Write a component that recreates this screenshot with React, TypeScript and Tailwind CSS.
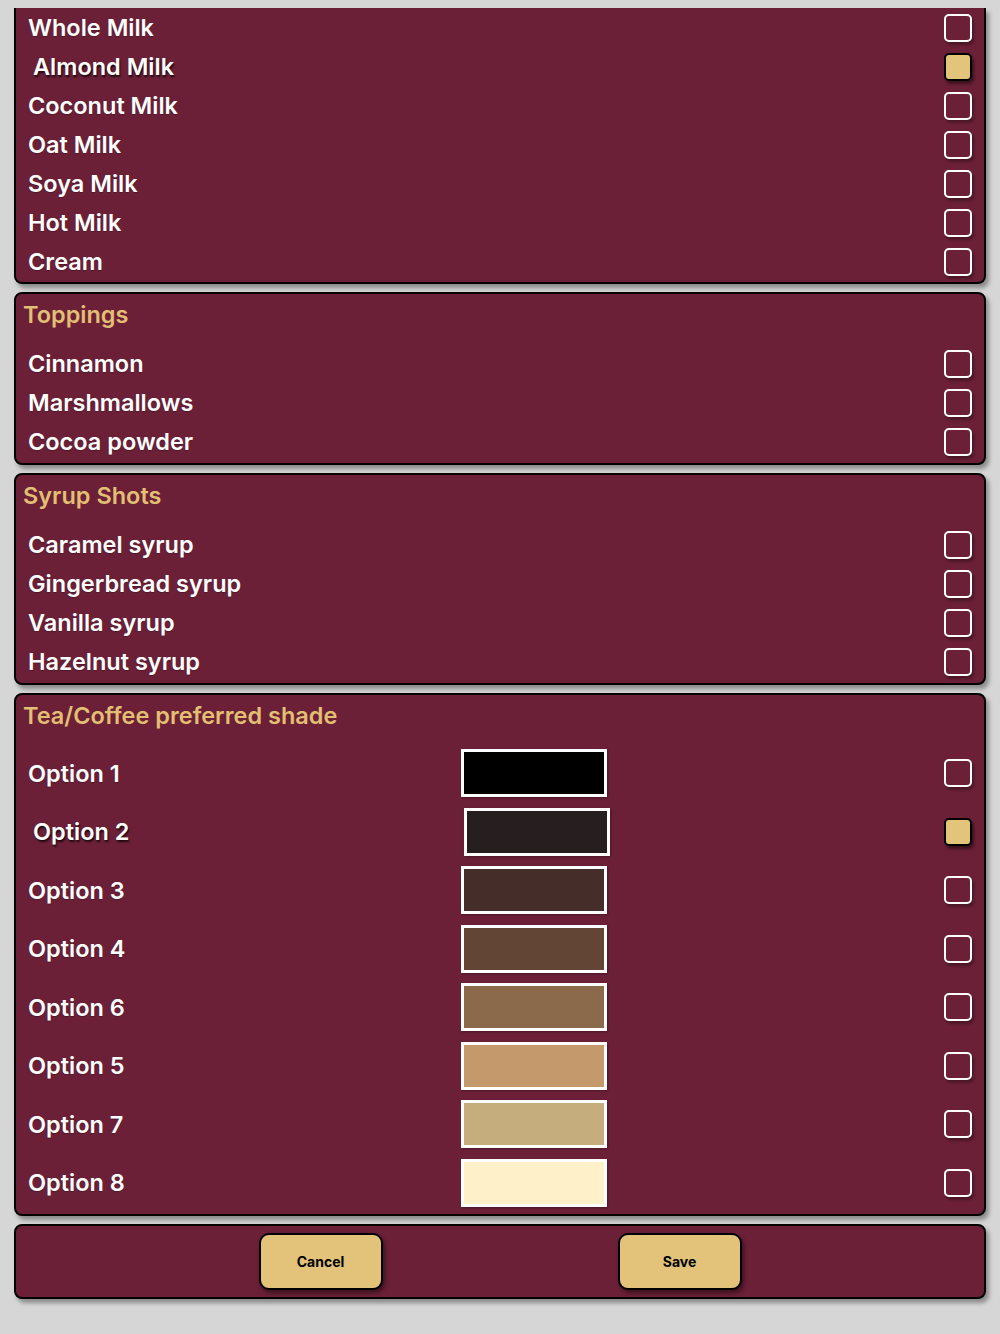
import React from "react";

const font = { fontFamily: "Inter, 'Noto Sans', sans-serif" };

function Check({ checked }: { checked?: boolean }) {
  return checked ? (
    <div className="w-[28px] h-[28px] rounded-[5px] border-2 border-black bg-[#e3c47b] shadow-[2px_3px_3px_rgba(0,0,0,0.45)]" />
  ) : (
    <div className="w-[28px] h-[28px] rounded-[5px] border-2 border-white shadow-[2px_3px_3px_rgba(0,0,0,0.3)]" />
  );
}

function Row({ label, checked }: { label: string; checked?: boolean }) {
  return (
    <div className="h-[39px] flex items-center justify-between pl-[12px] pr-[12px]">
      <span
        className={
          "text-[23.5px] font-semibold text-white " +
          (checked
            ? "translate-x-[5px] [text-shadow:1px_2px_2px_rgba(0,0,0,0.75)]"
            : "[text-shadow:0_1px_1px_rgba(0,0,0,0.25)]")
        }
      >
        {label}
      </span>
      <Check checked={checked} />
    </div>
  );
}

function Header({ title }: { title: string }) {
  return (
    <div className="h-[42px] flex items-center pl-[7px]">
      <span className="text-[23.5px] font-semibold text-[#e2bf73]">{title}</span>
    </div>
  );
}

const panel =
  "mx-[14px] bg-[#6b2038] border-2 border-black rounded-[8px] shadow-[3px_4px_4px_rgba(0,0,0,0.35)]";

const shades = [
  { label: "Option 1", color: "#000000" },
  { label: "Option 2", color: "#261e1f", checked: true },
  { label: "Option 3", color: "#452e29" },
  { label: "Option 4", color: "#634535" },
  { label: "Option 6", color: "#8a6a4b" },
  { label: "Option 5", color: "#c4996b" },
  { label: "Option 7", color: "#c5ad7e" },
  { label: "Option 8", color: "#fef1ca" },
];

export default function App() {
  return (
    <div className="w-[1000px] h-[1334px] bg-[#d6d6d6] overflow-hidden" style={font}>
      <div className="pt-[10px]">
        <div className={panel + " border-t-0 rounded-t-none"}>
          <div className="-mt-[2px] pb-[1px]">
            <Row label="Whole Milk" />
            <Row label="Almond Milk" checked />
            <Row label="Coconut Milk" />
            <Row label="Oat Milk" />
            <Row label="Soya Milk" />
            <Row label="Hot Milk" />
            <Row label="Cream" />
          </div>
        </div>

        <div className={panel + " mt-[8px] pb-[2px]"}>
          <Header title="Toppings" />
          <div className="mt-[8px]">
            <Row label="Cinnamon" />
            <Row label="Marshmallows" />
            <Row label="Cocoa powder" />
          </div>
        </div>

        <div className={panel + " mt-[8px] pb-[2px]"}>
          <Header title="Syrup Shots" />
          <div className="mt-[8px]">
            <Row label="Caramel syrup" />
            <Row label="Gingerbread syrup" />
            <Row label="Vanilla syrup" />
            <Row label="Hazelnut syrup" />
          </div>
        </div>

        <div className={panel + " mt-[8px] pb-[2px]"}>
          <Header title="Tea/Coffee preferred shade" />
          <div className="mt-[7px]">
            {shades.map((s) => (
              <div key={s.label} className="h-[58.5px] flex items-center pl-[12px] pr-[12px]">
                <span
                  className={
                    "w-[432px] text-[23.5px] font-semibold text-white " +
                    (s.checked
                      ? "translate-x-[5px] [text-shadow:1px_2px_2px_rgba(0,0,0,0.75)]"
                      : "[text-shadow:0_1px_1px_rgba(0,0,0,0.25)]")
                  }
                >
                  {s.label}
                </span>
                <div
                  className={
                    "w-[146px] h-[48px] border-[3px] border-white shadow-[1px_1px_2px_rgba(0,0,0,0.3)] " +
                    (s.checked ? "translate-x-[4px]" : "translate-x-[1px]")
                  }
                  style={{ backgroundColor: s.color }}
                />
                <div className="flex-1" />
                <Check checked={s.checked} />
              </div>
            ))}
          </div>
        </div>

        <div className={panel + " mt-[8px] py-[7px] flex justify-center gap-[235px]"}>
          <button className="w-[124px] h-[57px] rounded-[10px] bg-[#e3c279] border-2 border-black shadow-[2px_3px_4px_rgba(0,0,0,0.45)] text-[14px] font-bold text-black">
            Cancel
          </button>
          <button className="w-[124px] h-[57px] rounded-[10px] bg-[#e3c279] border-2 border-black shadow-[2px_3px_4px_rgba(0,0,0,0.45)] text-[14px] font-bold text-black">
            Save
          </button>
        </div>
      </div>
    </div>
  );
}
